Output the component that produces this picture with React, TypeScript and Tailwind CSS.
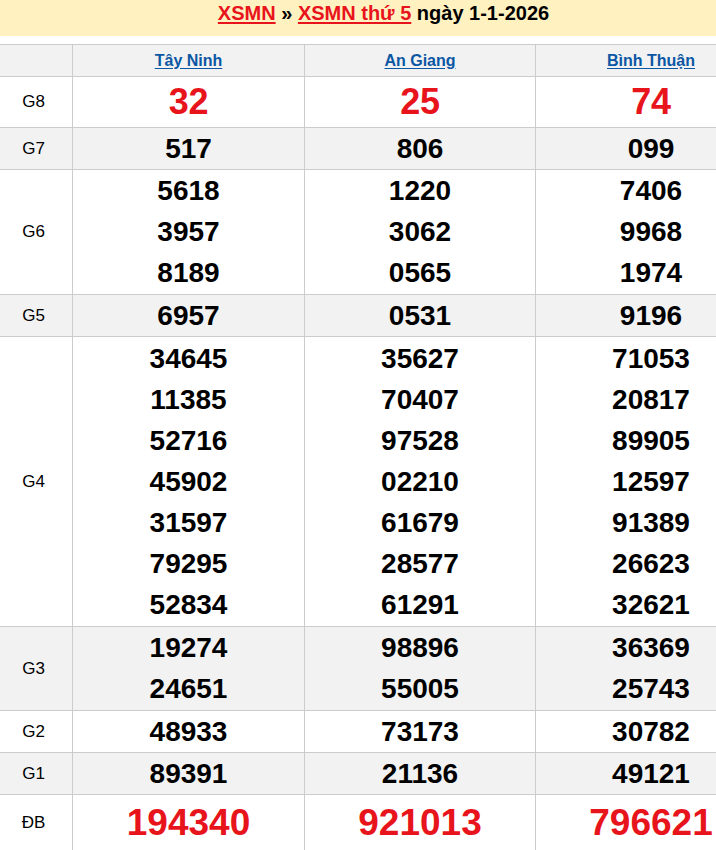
import React from "react";

const provinces = ["Tây Ninh", "An Giang", "Bình Thuận"];

type Row = { label: string; values: string[][]; kind?: "g8" | "db"; pad?: string };

const rows: Row[] = [
  { label: "G8", values: [["32"], ["25"], ["74"]], kind: "g8" },
  { label: "G7", values: [["517"], ["806"], ["099"]] },
  {
    label: "G6",
    pad: "pb-px",
    values: [
      ["5618", "3957", "8189"],
      ["1220", "3062", "0565"],
      ["7406", "9968", "1974"],
    ],
  },
  { label: "G5", values: [["6957"], ["0531"], ["9196"]] },
  {
    label: "G4",
    pad: "py-px",
    values: [
      ["34645", "11385", "52716", "45902", "31597", "79295", "52834"],
      ["35627", "70407", "97528", "02210", "61679", "28577", "61291"],
      ["71053", "20817", "89905", "12597", "91389", "26623", "32621"],
    ],
  },
  {
    label: "G3",
    pad: "pb-px",
    values: [
      ["19274", "24651"],
      ["98896", "55005"],
      ["36369", "25743"],
    ],
  },
  { label: "G2", values: [["48933"], ["73173"], ["30782"]] },
  { label: "G1", values: [["89391"], ["21136"], ["49121"]] },
  { label: "ĐB", values: [["194340"], ["921013"], ["796621"]], kind: "db" },
];

const colW = ["w-[232px]", "w-[231px]", "w-[231px]"];

export default function App() {
  return (
    <div
      className="w-[767px] bg-white text-black"
      style={{ fontFamily: '"Liberation Sans", Arial, sans-serif' }}
    >
      <div className="bg-[#fff2c0] pt-px pb-[11px] text-center text-[20px] font-bold leading-[24px]">
        <span className="text-[#e8141c] underline underline-offset-2">XSMN</span>
        <span> » </span>
        <span className="text-[#e8141c] underline underline-offset-2">XSMN thứ 5</span>
        <span> ngày 1-1-2026</span>
      </div>
      <div className="mt-2 border-t border-[#cccccc]">
        <div className="flex border-b border-[#cccccc] bg-[#f2f2f2]">
          <div className="w-[73px] border-r border-[#cccccc] h-[31px]" />
          {provinces.map((p, i) => (
            <div
              key={p}
              className={`${colW[i]} border-r border-[#cccccc] flex items-center justify-center h-[31px]`}
            >
              <span className="text-[16px] font-bold text-[#0b57a4] underline underline-offset-2">
                {p}
              </span>
            </div>
          ))}
        </div>
        {rows.map((r, ri) => {
          const bg = ri % 2 === 1 ? "bg-[#f2f2f2]" : "bg-white";
          return (
            <div key={r.label} className={`flex border-b border-[#cccccc] ${bg}`}>
              <div className="w-[73px] border-r border-[#cccccc] flex items-center justify-center pr-[5px] text-[17px]">
                {r.label}
              </div>
              {r.values.map((col, ci) => (
                <div
                  key={ci}
                  className={`${colW[ci]} border-r border-[#cccccc] flex flex-col items-center ${r.pad ?? ""}`}
                >
                  {col.map((v, vi) =>
                    r.kind === "g8" ? (
                      <div
                        key={vi}
                        className="text-[36px] font-bold leading-[50px] text-[#e8141c] tracking-[-0.3px]"
                      >
                        {v}
                      </div>
                    ) : r.kind === "db" ? (
                      <div
                        key={vi}
                        className="text-[37px] font-bold leading-[56px] text-[#e8141c]"
                      >
                        {v}
                      </div>
                    ) : (
                      <div key={vi} className="text-[28px] font-bold leading-[41px]">
                        {v}
                      </div>
                    )
                  )}
                </div>
              ))}
            </div>
          );
        })}
      </div>
    </div>
  );
}
